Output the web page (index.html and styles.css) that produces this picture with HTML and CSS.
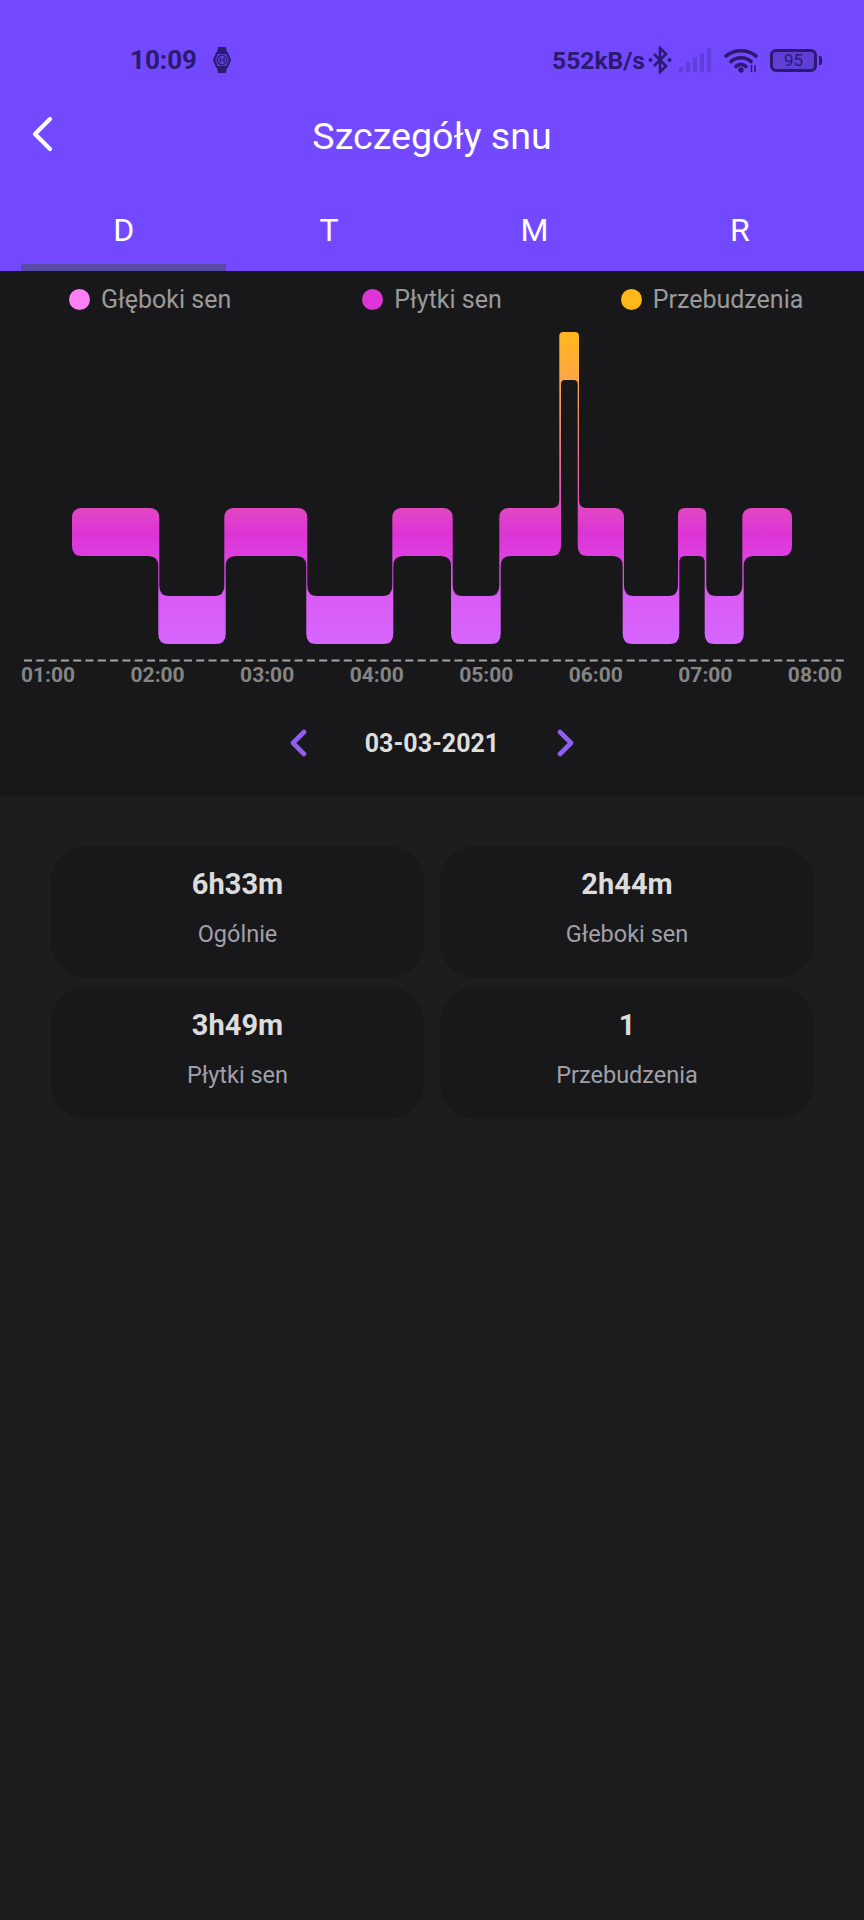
FILE: index.html
```html
<!DOCTYPE html>
<html lang="pl">
<head>
<meta charset="utf-8">
<title>Szczegóły snu</title>
<link rel="stylesheet" href="styles.css">
</head>
<body>
<header class="top">
  <div class="status">
    <div class="status-left">
      <span class="clock">10:09</span>
      <svg class="watch" viewBox="0 0 18 26"><path d="M5 0h8l1 6H4zM4 20h10l-1 6H5z" fill="#2b1a70"/><path d="M4 6h10l3 7-3 7H4l-3-7z" fill="#5f3fd6" stroke="#2b1a70" stroke-width="2"/><circle cx="9" cy="13" r="4.800" fill="none" stroke="#2b1a70" stroke-width="1.300"/><path d="M7 10.500v5M11 10.500v5M7 13h4" stroke="#2b1a70" stroke-width="1.200" fill="none"/></svg>
    </div>
    <div class="status-right">
      <span class="speed">552kB/s</span>
      <svg class="bt" viewBox="0 0 24 28"><path d="M6 8l12 12-6 6V2l6 6L6 20" fill="none" stroke="#2b1a70" stroke-width="2.600"/><circle cx="2.500" cy="14" r="2" fill="#2b1a70"/><circle cx="21.500" cy="14" r="2" fill="#2b1a70"/></svg>
      <svg class="signal" viewBox="0 0 32 24"><g fill="#5f3fd6"><rect x="0" y="19" width="4" height="5" rx="1"/><rect x="7" y="14" width="4" height="10" rx="1"/><rect x="14" y="9" width="4" height="15" rx="1"/><rect x="21" y="5" width="4" height="19" rx="1"/><rect x="28" y="0" width="4" height="24" rx="1"/></g></svg>
      <svg class="wifi" viewBox="0 0 34 25"><g fill="none" stroke="#2b1a70" stroke-width="3.600" stroke-linecap="round"><path d="M2 8c8.500-7 21.500-7 30 0"/><path d="M7 13.500c6-5 14-5 20 0"/><path d="M12 18.500c3-2.500 7-2.500 10 0"/></g><circle cx="17" cy="22" r="2.700" fill="#2b1a70"/><path d="M27.500 17v7M31 17v7" stroke="#2b1a70" stroke-width="1.500"/></svg>
      <div class="battery"><span class="battery-body">95</span><span class="battery-tip"></span></div>
    </div>
  </div>
  <div class="titlebar">
    <svg class="back" viewBox="0 0 22 36"><path d="M19 3L4 18l15 15" fill="none" stroke="#fff" stroke-width="4.200" stroke-linecap="round" stroke-linejoin="round"/></svg>
    <h1 class="title">Szczegóły snu</h1>
  </div>
  <nav class="tabs">
    <div class="tab tab-active">D</div>
    <div class="tab">T</div>
    <div class="tab">M</div>
    <div class="tab">R</div>
  </nav>
</header>

<section class="panel">
  <div class="legend">
    <div class="legend-item item-deep"><span class="dot dot-deep"></span>Głęboki sen</div>
    <div class="legend-item item-light"><span class="dot dot-light"></span>Płytki sen</div>
    <div class="legend-item item-wake"><span class="dot dot-wake"></span>Przebudzenia</div>
  </div>
  <svg class="chart" viewBox="0 330 864 332" width="864" height="332">
    <defs>
      <linearGradient id="sleep" gradientUnits="userSpaceOnUse" x1="0" y1="332" x2="0" y2="644">
        <stop offset="0" stop-color="#ffb81c"/>
        <stop offset="0.154" stop-color="#ffa648"/>
        <stop offset="0.55" stop-color="#e14fbc"/>
        <stop offset="0.577" stop-color="#e044c6"/>
        <stop offset="0.65" stop-color="#dc34d6"/>
        <stop offset="0.718" stop-color="#de3fe0"/>
        <stop offset="0.846" stop-color="#d95bf4"/>
        <stop offset="1" stop-color="#d666ff"/>
      </linearGradient>
    </defs>
    <path fill="url(#sleep)" d="M72 518Q72 508 82 508H149.300Q159.300 508 159.300 518V586Q159.300 596 169.300 596H214.300Q224.300 596 224.300 586V518Q224.300 508 234.300 508H297.300Q307.300 508 307.300 518V586Q307.300 596 317.300 596H382.300Q392.300 596 392.300 586V518Q392.300 508 402.300 508H442.700Q452.700 508 452.700 518V586Q452.700 596 462.700 596H489.300Q499.300 596 499.300 586V518Q499.300 508 509.300 508H552Q559.300 508 559.300 500V336Q559.300 332 563.300 332H575Q579 332 579 336V500Q579 508 586 508H614Q624 508 624 518V586Q624 596 634 596H668Q678 596 678 586V515Q678 508 685 508H699.300Q706.300 508 706.300 515V586Q706.300 596 716.300 596H732.300Q742.300 596 742.300 586V518Q742.300 508 752.300 508H782Q792 508 792 518V546Q792 556 782 556H753.700Q743.700 556 743.700 566V634Q743.700 644 733.700 644H714.700Q704.700 644 704.700 634V562Q704.700 556 698.700 556H685.300Q679.300 556 679.300 562V634Q679.300 644 669.300 644H632.700Q622.700 644 622.700 634V566Q622.700 556 612.700 556H587.700Q577.700 556 577.700 546V384Q577.700 380 573.700 380H565Q561 380 561 384V546Q561 556 551 556H510.700Q500.700 556 500.700 566V634Q500.700 644 490.700 644H461Q451 644 451 634V566Q451 556 441 556H403.300Q393.300 556 393.300 566V634Q393.300 644 383.300 644H316.300Q306.300 644 306.300 634V566Q306.300 556 296.300 556H235.700Q225.700 556 225.700 566V634Q225.700 644 215.700 644H168.300Q158.300 644 158.300 634V566Q158.300 556 148.300 556H82Q72 556 72 546Z"/>
    <line x1="24" y1="660.500" x2="846" y2="660.500" stroke="#a3a3a3" stroke-width="1.800" stroke-dasharray="8 4.300"/>
  </svg>
  <div class="axis">
    <span>01:00</span><span>02:00</span><span>03:00</span><span>04:00</span><span>05:00</span><span>06:00</span><span>07:00</span><span>08:00</span>
  </div>
  <div class="dates">
    <svg class="arrow" viewBox="0 0 18 28"><path d="M15 3L4 14l11 11" fill="none" stroke="#8f5ef0" stroke-width="4.600" stroke-linecap="round" stroke-linejoin="round"/></svg>
    <span class="date">03-03-2021</span>
    <svg class="arrow" viewBox="0 0 18 28"><path d="M3 3l11 11L3 25" fill="none" stroke="#8f5ef0" stroke-width="4.600" stroke-linecap="round" stroke-linejoin="round"/></svg>
  </div>
</section>

<main class="stats">
  <div class="card"><div class="value">6h33m</div><div class="label">Ogólnie</div></div>
  <div class="card"><div class="value">2h44m</div><div class="label">Głeboki sen</div></div>
  <div class="card"><div class="value">3h49m</div><div class="label">Płytki sen</div></div>
  <div class="card"><div class="value">1</div><div class="label">Przebudzenia</div></div>
</main>
</body>
</html>
```
FILE: styles.css
```css
* { box-sizing: border-box; }
html, body { margin: 0; padding: 0; }
body {
  width: 864px;
  height: 1920px;
  overflow: hidden;
  background: #1c1d1f;
  font-family: Roboto, "Liberation Sans", sans-serif;
}
.top {
  height: 271px;
  background: #7349ff;
  display: flex;
  flex-direction: column;
}
.status {
  height: 46px;
  margin-top: 37px;
  padding: 0 42px 0 130px;
  display: flex;
  justify-content: space-between;
  align-items: center;
  color: #2b1a70;
}
.status-left, .status-right { display: flex; align-items: center; }
.clock { font-size: 26px; font-weight: 700; }
.watch { width: 18px; height: 26px; margin-left: 16px; }
.speed { font-size: 24.6px; font-weight: 700; }
.bt { width: 24px; height: 28px; margin-left: 3px; }
.signal { width: 32px; height: 24px; margin-left: 7px; }
.wifi { width: 34px; height: 25px; margin-left: 13px; }
.battery { display: flex; align-items: center; margin-left: 12px; }
.battery-body {
  width: 47px;
  height: 23px;
  border: 3px solid #2b1a70;
  border-radius: 6px;
  background: #5f3fd6;
  color: #2b1a70;
  font-size: 17px;
  line-height: 17px;
  text-align: center;
}
.battery-tip {
  width: 3px;
  height: 9px;
  margin-left: 2px;
  background: #2b1a70;
  border-radius: 0 2px 2px 0;
}
.titlebar {
  position: relative;
  height: 56px;
  margin-top: 25px;
  display: flex;
  align-items: center;
  justify-content: center;
}
.back {
  position: absolute;
  left: 31px;
  top: 8px;
  width: 22px;
  height: 36px;
}
.title {
  margin: 0;
  font-size: 37.6px;
  font-weight: 400;
  color: #fff;
}
.tabs {
  margin-top: 32px;
  padding: 0 21px 0 21px;
  display: grid;
  grid-template-columns: repeat(4, 205.4px);
  flex: 1;
}
.tab {
  height: 100%;
  color: #fff;
  font-size: 32px;
  text-align: center;
  line-height: 68px;
}
.tab-active { border-bottom: 7px solid #5a4aa8; border-radius: 3px 3px 0 0; }
.panel {
  height: 525px;
  background: #18181a;
  display: flex;
  flex-direction: column;
}
.legend {
  height: 54px;
  padding-top: 12px;
  display: flex;
  font-size: 25px;
  color: #9a9a9a;
}
.legend-item { display: flex; align-items: center; height: 32px; gap: 11px; }
.item-deep { margin-left: 69px; }
.item-light { margin-left: 131px; }
.item-wake { margin-left: 119px; }
.dot { width: 21px; height: 21px; border-radius: 50%; }
.dot-deep { background: #ff80f6; }
.dot-light { background: #dc34d6; }
.dot-wake { background: #ffb81c; }
.chart { display: block; margin-top: 5px; flex: none; }
.axis {
  display: flex;
  justify-content: space-between;
  padding: 0 22px 0 21px;
  font-size: 21px;
  font-weight: 700;
  color: #858585;
  line-height: 26px;
}
.dates {
  margin-top: 40px;
  display: flex;
  align-items: center;
  justify-content: center;
  height: 30px;
}
.arrow { width: 18px; height: 28px; }
.date {
  width: 250px;
  text-align: center;
  font-size: 25px;
  font-weight: 700;
  color: #dedede;
}
.stats {
  padding: 50px 50px 0 51px;
  display: grid;
  grid-template-columns: 373px 374px;
  grid-auto-rows: 132px;
  column-gap: 16px;
  row-gap: 9px;
}
.card {
  background: #18181a;
  border-radius: 36px;
  text-align: center;
  padding-top: 20px;
}
.value {
  font-size: 29px;
  font-weight: 700;
  color: #dcdcdc;
  line-height: 36px;
}
.label {
  margin-top: 16px;
  font-size: 23.5px;
  color: #a0a0aa;
  line-height: 32px;
}
```
